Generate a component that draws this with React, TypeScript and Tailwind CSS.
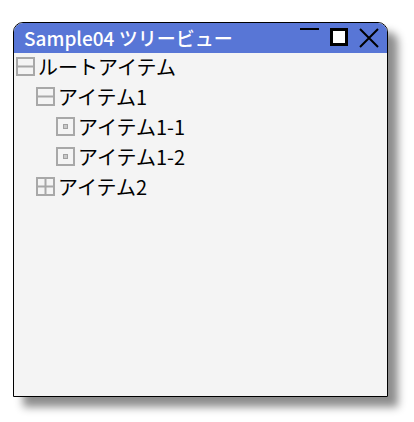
import React from "react";

type Kind = "open" | "closed" | "leaf";

function NodeIcon({ kind }: { kind: Kind }) {
  return (
    <svg width="19" height="19" viewBox="0 0 19 19" className="shrink-0">
      <rect x="1" y="1" width="17" height="17" fill="#f4f4f4" stroke="#a8a8a8" strokeWidth="2" />
      {kind !== "leaf" && <line x1="1" y1="9.5" x2="18" y2="9.5" stroke="#a8a8a8" strokeWidth="2" />}
      {kind === "closed" && <line x1="9.5" y1="1" x2="9.5" y2="18" stroke="#a8a8a8" strokeWidth="2" />}
      {kind === "leaf" && <rect x="7.5" y="7.5" width="4" height="4" fill="#c8c8c8" stroke="#a0a0a0" strokeWidth="1" />}
    </svg>
  );
}

const rows: { label: string; level: number; kind: Kind }[] = [
  { label: "ルートアイテム", level: 0, kind: "open" },
  { label: "アイテム1", level: 1, kind: "open" },
  { label: "アイテム1-1", level: 2, kind: "leaf" },
  { label: "アイテム1-2", level: 2, kind: "leaf" },
  { label: "アイテム2", level: 1, kind: "closed" },
];

const indent = ["pl-[2px]", "pl-[22px]", "pl-[42px]"];

export default function App() {
  return (
    <div className="w-[414px] h-[422px] bg-white pl-[13px] pt-[22px] font-['Noto_Sans_CJK_JP','Noto_Sans',sans-serif]">
      <div className="w-[375px] h-[375px] border border-black rounded-t-[10px] overflow-hidden flex flex-col shadow-[10px_10px_8px_rgba(0,0,0,0.45)]">
        <div className="h-[30px] bg-[#5876d6] flex items-center justify-between shrink-0">
          <span className="pl-[10px] text-white text-[19px] font-medium leading-none -mt-[1px]">Sample04 ツリービュー</span>
          <div className="flex items-start gap-[10px] pr-[8px] h-[20px]">
            <svg width="20" height="20" viewBox="0 0 20 20">
              <line x1="0" y1="1" x2="19" y2="1" stroke="black" strokeWidth="2" />
            </svg>
            <svg width="19" height="19" viewBox="0 0 19 19">
              <rect x="1.5" y="1.5" width="15" height="15" fill="white" stroke="black" strokeWidth="3" />
            </svg>
            <svg width="20" height="20" viewBox="0 0 20 20">
              <path d="M1 1 L19 19 M19 1 L1 19" stroke="black" strokeWidth="2" />
            </svg>
          </div>
        </div>
        <div className="flex-1 bg-[#f4f4f4]">
          {rows.map((r) => (
            <div key={r.label} className={`h-[30px] pb-[3px] flex items-center gap-[3px] ${indent[r.level]}`}>
              <NodeIcon kind={r.kind} />
              <span className="text-[20px] text-black leading-none">{r.label}</span>
            </div>
          ))}
        </div>
      </div>
    </div>
  );
}
